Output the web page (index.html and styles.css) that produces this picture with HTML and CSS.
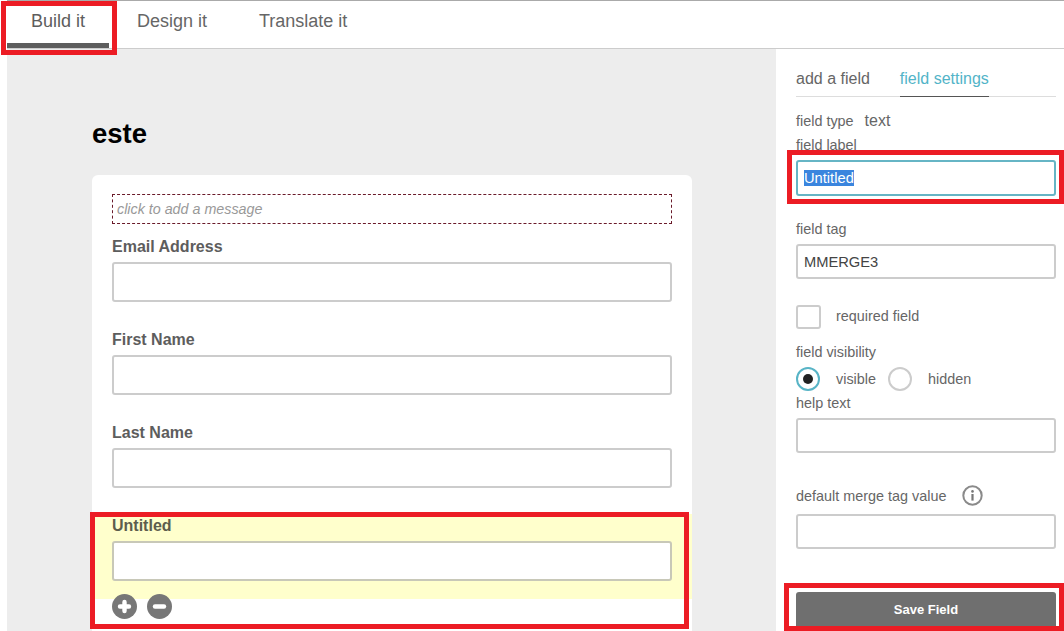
FILE: index.html
```html
<!DOCTYPE html>
<html lang="en">
<head>
<meta charset="utf-8">
<title>Form builder</title>
<link rel="stylesheet" href="styles.css">
</head>
<body>
<nav class="tabs">
  <a class="tab tab-build">Build it</a>
  <a class="tab tab-design">Design it</a>
  <a class="tab tab-translate">Translate it</a>
</nav>
<div class="workspace">
  <main class="canvas">
    <h1 class="form-title">este</h1>
    <section class="card">
      <div class="message">click to add a message</div>
      <div class="field">
        <label class="field-label">Email Address</label>
        <div class="input"></div>
      </div>
      <div class="field">
        <label class="field-label">First Name</label>
        <div class="input"></div>
      </div>
      <div class="field">
        <label class="field-label">Last Name</label>
        <div class="input"></div>
      </div>
      <div class="field field-active">
        <label class="field-label">Untitled</label>
        <div class="input"></div>
      </div>
      <div class="actions">
        <svg class="action" viewBox="0 0 25 25" aria-label="add"><circle cx="12.5" cy="12.5" r="12.5" fill="#777"/><path d="M12.5 8v9M8 12.5h9" stroke="#fff" stroke-width="4.4" stroke-linecap="round"/></svg>
        <svg class="action" viewBox="0 0 25 25" aria-label="remove"><circle cx="12.5" cy="12.5" r="12.5" fill="#777"/><path d="M8 12.5h9" stroke="#fff" stroke-width="4.4" stroke-linecap="round"/></svg>
      </div>
    </section>
  </main>
  <aside class="panel">
    <div class="panel-tabs">
      <span class="panel-tab">add a field</span>
      <span class="panel-tab panel-tab-active">field settings</span>
    </div>
    <div class="type-row"><span class="small">field type</span><span class="type-value">text</span></div>
    <div class="small label-tight">field label</div>
    <div class="text-box text-box-focus"><span class="selected">Untitled</span></div>
    <div class="small label-tag">field tag</div>
    <div class="text-box">MMERGE3</div>
    <div class="check-row"><span class="checkbox"></span><span class="small check-text">required field</span></div>
    <div class="small label-visibility">field visibility</div>
    <div class="radio-row">
      <span class="radio radio-on"><span class="radio-dot"></span></span>
      <span class="small radio-text">visible</span>
      <span class="radio"></span>
      <span class="small radio-text">hidden</span>
    </div>
    <div class="small label-help">help text</div>
    <div class="text-box"></div>
    <div class="merge-row">
      <span class="small">default merge tag value</span>
      <svg class="info" viewBox="0 0 21 21" aria-label="info"><circle cx="10.5" cy="10.5" r="9.2" fill="none" stroke="#8a8a8a" stroke-width="2"/><circle cx="10.5" cy="6.4" r="1.3" fill="#777"/><rect x="9.4" y="9" width="2.2" height="6.6" fill="#777"/></svg>
    </div>
    <div class="text-box"></div>
    <button class="save">Save Field</button>
  </aside>
</div>
<div class="mark mark-tab"></div>
<div class="mark mark-label"></div>
<div class="mark mark-save"></div>
<div class="mark mark-field"></div>
</body>
</html>
```
FILE: styles.css
```css
* { box-sizing: border-box; }
html, body { margin: 0; height: 631px; overflow: hidden; background: #fff; }
body { position: relative; width: 1064px; font-family: "Liberation Sans", Arial, sans-serif; color: #5d5d5d; }

.tabs { display: flex; height: 49px; margin-left: 7px; border-top: 1px solid #aaa; border-bottom: 1px solid #ccc; }
.tab { display: block; height: 47px; font-size: 18px; line-height: 40px; color: #666; }
.tab-build { width: 102px; padding-left: 24px; border-bottom: 5px solid #5d5d5d; color: #5d5d5d; }
.tab-design { width: 122px; padding-left: 28px; }
.tab-translate { padding-left: 28px; }

.workspace { display: flex; height: 582px; margin-left: 7px; }
.canvas { width: 769px; padding: 69px 84px 0 85px; background: #ededed; overflow: hidden; }
.form-title { margin: 0 0 24px; height: 33px; font-size: 27.5px; line-height: 31px; font-weight: bold; color: #000; }

.card { width: 600px; height: 470px; padding: 19px 20px 0; background: #fff; border-radius: 6px 6px 0 0; }
.message { height: 30px; margin-bottom: 11px; padding-left: 4px; border: 1px dashed #6a1a2a; font-size: 14.3px; font-style: italic; line-height: 28px; color: #999; }
.field { height: 93px; }
.field-label { display: block; height: 22px; margin-bottom: 5px; font-size: 16px; font-weight: bold; line-height: 24px; color: #5d5d5d; }
.input { height: 40px; background: #fff; border: 2px solid #ccc; border-radius: 3px; }
.field-active { height: 85px; margin: 0 -20px; padding: 0 20px; background: #ffffcc; }
.field-active .field-label { color: #5d5d4d; }
.field-active .input { border-color: #c8c8b8; }
.actions { display: flex; gap: 10px; margin-top: -5px; position: relative; }
.action { width: 25px; height: 25px; display: block; }

.panel { width: 288px; padding: 0 8px 0 20px; background: #fff; }
.panel-tabs { display: flex; gap: 30px; height: 48px; padding-top: 20px; border-bottom: 1px solid #ddd; font-size: 16px; line-height: 20px; color: #666; }
.panel-tab { display: block; height: 28px; }
.panel-tab-active { color: #52b4c8; border-bottom: 1px solid #555; }
.small { font-size: 14.4px; line-height: 18px; color: #666; }
.type-row { display: flex; gap: 11px; align-items: center; height: 18px; margin-top: 15px; }
.type-value { font-size: 16px; color: #666; }
.label-tight { margin-top: 6px; height: 23px; }
.text-box { width: 260px; height: 35px; padding-left: 6px; background: #fff; border: 2px solid #ccc; border-radius: 3px; font-size: 14.7px; line-height: 32px; color: #444; }
.text-box-focus { height: 36px; margin-top: 1px; border-color: #66b5c5; }
.selected { background: #3a85de; color: #fff; }
.label-tag { margin-top: 24px; margin-bottom: 6px; }
.check-row { display: flex; align-items: center; gap: 15px; margin-top: 26px; height: 24px; }
.check-text { margin-bottom: 2px; }
.checkbox { width: 25px; height: 24px; border: 2px solid #ccc; border-radius: 3px; }
.label-visibility { margin-top: 14px; }
.radio-row { display: flex; align-items: center; height: 24px; margin-top: 6px; }
.radio { width: 24px; height: 24px; border: 2px solid #ccc; border-radius: 50%; display: flex; align-items: center; justify-content: center; }
.radio-on { border-color: #58b4c6; }
.radio-dot { width: 10px; height: 10px; border-radius: 50%; background: #222; }
.radio-text { margin-left: 16px; margin-right: 12px; }
.label-help { margin-top: 3px; margin-bottom: 6px; }
.merge-row { display: flex; align-items: center; gap: 16px; height: 21px; margin-top: 32px; margin-bottom: 8px; }
.info { width: 21px; height: 21px; display: block; }
.save { display: block; width: 260px; height: 34px; margin-top: 43px; border: 0; border-radius: 3px 3px 0 0; background: #6f6f6f; color: #fff; font-family: "Liberation Sans", Arial, sans-serif; font-size: 13px; font-weight: bold; }

.mark { position: absolute; border: 5px solid #ec1c24; }
.mark-tab { left: 1px; top: 1px; width: 116px; height: 54px; }
.mark-label { left: 787px; top: 150px; width: 277px; height: 54px; }
.mark-save { left: 784px; top: 583px; width: 280px; height: 48px; }
.mark-field { left: 90px; top: 512px; width: 599px; height: 117px; }
```
